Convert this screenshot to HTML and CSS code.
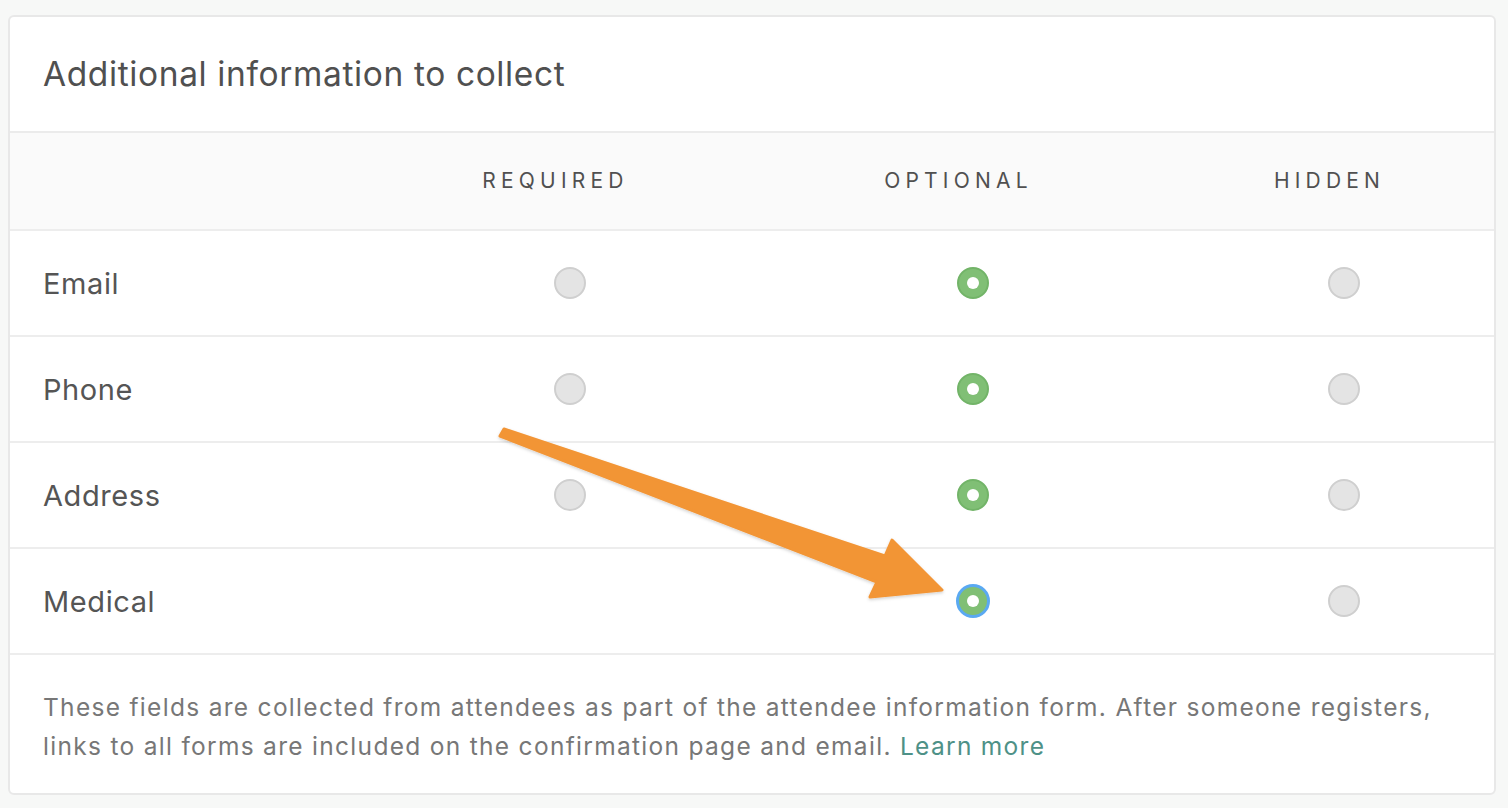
FILE: index.html
```html
<!DOCTYPE html>
<html lang="en">
<head>
<meta charset="utf-8">
<title>Additional information to collect</title>
<link rel="stylesheet" href="styles.css">
</head>
<body>
<div class="page">
  <section class="card">
    <header class="card-head">
      <h2 class="title">Additional information to collect</h2>
    </header>
    <div class="grid">
      <div class="row head-row">
        <div class="cell label"></div>
        <div class="cell col-h">REQUIRED</div>
        <div class="cell col-h">OPTIONAL</div>
        <div class="cell col-h">HIDDEN</div>
      </div>
      <div class="row">
        <div class="cell label">Email</div>
        <div class="cell opt"><span class="radio"></span></div>
        <div class="cell opt"><span class="radio on"></span></div>
        <div class="cell opt"><span class="radio"></span></div>
      </div>
      <div class="row">
        <div class="cell label">Phone</div>
        <div class="cell opt"><span class="radio"></span></div>
        <div class="cell opt"><span class="radio on"></span></div>
        <div class="cell opt"><span class="radio"></span></div>
      </div>
      <div class="row">
        <div class="cell label">Address</div>
        <div class="cell opt"><span class="radio"></span></div>
        <div class="cell opt"><span class="radio on"></span></div>
        <div class="cell opt"><span class="radio"></span></div>
      </div>
      <div class="row">
        <div class="cell label">Medical</div>
        <div class="cell opt"></div>
        <div class="cell opt"><span class="radio on focus"></span></div>
        <div class="cell opt"><span class="radio"></span></div>
      </div>
    </div>
    <footer class="card-foot">
      <p class="note">These fields are collected from attendees as part of the attendee information form. After someone registers, links to all forms are included on the confirmation page and email. <a class="link" href="#">Learn more</a></p>
    </footer>
    <svg class="arrow" width="1508" height="808" viewBox="0 0 1508 808" aria-hidden="true">
      <defs>
        <filter id="sh" x="-10%" y="-10%" width="120%" height="130%">
          <feDropShadow dx="0" dy="1.5" stdDeviation="1.5" flood-color="#000" flood-opacity="0.18"/>
        </filter>
      </defs>
      <path d="M504 429 L885 556 L892 540 L942 590 L870 597 L877 582 L500 436 Z" fill="#f29536" stroke="#f29536" stroke-width="3" stroke-linejoin="round" filter="url(#sh)"/>
    </svg>
  </section>
</div>
</body>
</html>
```
FILE: styles.css
```css
html, body {
  margin: 0;
  padding: 0;
}
body {
  background: #f7f8f7;
  font-family: Inter, "Noto Sans", "Liberation Sans", sans-serif;
  color: #555;
}
.page {
  padding: 15px 12px 11px 8px;
}
.card {
  position: relative;
  background: #fff;
  border: 2px solid #e8e8e8;
  border-radius: 6px;
}
.card-head {
  height: 114px;
  display: flex;
  align-items: center;
  padding-left: 33px;
  border-bottom: 2px solid #ebebeb;
}
.title {
  margin: 0;
  font-weight: 400;
  font-size: 33.5px;
  color: #505050;
  letter-spacing: 0.62px;
}
.row {
  display: grid;
  grid-template-columns: 360px 366px 440px 302px 1fr;
  height: 104px;
  border-bottom: 2px solid #ededed;
  align-items: center;
}
.head-row {
  height: 96px;
  background: #fafafa;
}
.cell.label {
  padding-left: 33px;
  font-size: 29px;
  letter-spacing: 0.6px;
  color: #555;
}
.col-h {
  text-align: center;
  font-size: 21px;
  letter-spacing: 5.2px;
  color: #505050;
  padding-bottom: 2px;
  padding-left: 5px;
}
.opt {
  display: flex;
  justify-content: center;
  padding-left: 34px;
}
.radio {
  box-sizing: border-box;
  width: 32px;
  height: 32px;
  border-radius: 50%;
  background: #e4e4e4;
  border: 2px solid #cfcfcf;
  display: flex;
  align-items: center;
  justify-content: center;
}
.radio.on {
  background: #80bf75;
  border-color: #72b468;
}
.radio.on::after {
  content: "";
  width: 12px;
  height: 12px;
  border-radius: 50%;
  background: #fff;
}
.radio.focus {
  width: 34px;
  height: 34px;
  border: 3px solid #5aa9f2;
  background: #80bf75;
}
.card-foot {
  padding: 33px 33px 27px 33px;
}
.note {
  margin: 0;
  font-size: 24.5px;
  line-height: 39px;
  letter-spacing: 1.3px;
  color: #777;
}
.link {
  color: #4e9187;
  text-decoration: none;
}
.arrow {
  position: absolute;
  left: -10px;
  top: -17px;
  pointer-events: none;
}
```
